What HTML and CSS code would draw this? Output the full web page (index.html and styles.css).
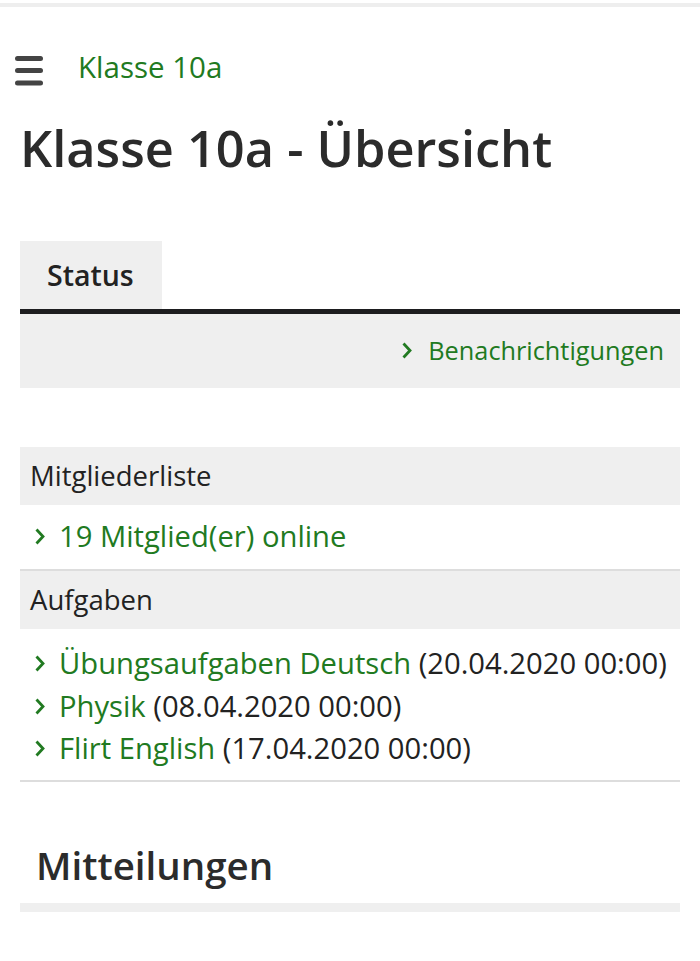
FILE: index.html
```html
<!DOCTYPE html>
<html lang="de">
<head>
<meta charset="utf-8">
<title>Klasse 10a - Übersicht</title>
<link rel="stylesheet" href="styles.css">
</head>
<body>
<div class="topbar"></div>
<header class="crumb">
  <svg class="burger" width="28" height="30" viewBox="0 0 28 30" aria-hidden="true">
    <rect x="0" y="0" width="28" height="5" rx="2.5" fill="#444"/>
    <rect x="0" y="12" width="28" height="5" rx="2.5" fill="#444"/>
    <rect x="0" y="24.5" width="28" height="5" rx="2.5" fill="#444"/>
  </svg>
  <a class="crumb-link" href="#">Klasse 10a</a>
</header>
<main class="page">
  <h1 class="title">Klasse 10a - Übersicht</h1>

  <div class="tabs">
    <div class="tab">Status</div>
  </div>
  <div class="tab-panel">
    <a class="link" href="#"><svg class="chev" width="10" height="17" viewBox="0 0 10 17" aria-hidden="true"><path d="M1.5 1.5 L8 8.5 L1.5 15.5" fill="none" stroke="currentColor" stroke-width="2.8"/></svg>Benachrichtigungen</a>
  </div>

  <section class="block">
    <div class="block-head">Mitgliederliste</div>
    <div class="block-body single">
      <a class="link" href="#"><svg class="chev" width="10" height="17" viewBox="0 0 10 17" aria-hidden="true"><path d="M1.5 1.5 L8 8.5 L1.5 15.5" fill="none" stroke="currentColor" stroke-width="2.8"/></svg>19 Mitglied(er) online</a>
    </div>
    <div class="block-head">Aufgaben</div>
    <div class="block-body list">
      <div class="item"><a class="link" href="#"><svg class="chev" width="10" height="17" viewBox="0 0 10 17" aria-hidden="true"><path d="M1.5 1.5 L8 8.5 L1.5 15.5" fill="none" stroke="currentColor" stroke-width="2.8"/></svg>Übungsaufgaben Deutsch</a> (20.04.2020 00:00)</div>
      <div class="item"><a class="link" href="#"><svg class="chev" width="10" height="17" viewBox="0 0 10 17" aria-hidden="true"><path d="M1.5 1.5 L8 8.5 L1.5 15.5" fill="none" stroke="currentColor" stroke-width="2.8"/></svg>Physik</a> (08.04.2020 00:00)</div>
      <div class="item"><a class="link" href="#"><svg class="chev" width="10" height="17" viewBox="0 0 10 17" aria-hidden="true"><path d="M1.5 1.5 L8 8.5 L1.5 15.5" fill="none" stroke="currentColor" stroke-width="2.8"/></svg>Flirt English</a> (17.04.2020 00:00)</div>
    </div>
  </section>

  <h2 class="subtitle">Mitteilungen</h2>
  <div class="subbar"></div>
</main>
</body>
</html>
```

FILE: styles.css
```css
* { box-sizing: border-box; }
html, body { margin: 0; padding: 0; background: #fff; }
body {
  font-family: "Open Sans", "Noto Sans", sans-serif;
  color: #222;
  width: 700px;
  height: 961px;
  overflow: hidden;
}
a { text-decoration: none; color: #217a21; }

.topbar {
  margin-top: 3px;
  height: 4px;
  background: #eeeeee;
}

.crumb {
  display: flex;
  align-items: center;
  gap: 35px;
  padding: 49px 15px 0;
  height: 79px;
}
.burger { display: block; flex: none; }
.crumb-link {
  font-size: 29.5px;
  line-height: 30px;
  padding-bottom: 8px;
  color: #217a21;
}

.page { padding: 0 20px; }

.title {
  margin: 29px 0 0;
  font-size: 50.5px;
  line-height: 66px;
  font-weight: 600;
  color: #2b2b2b;
}

.tabs {
  display: flex;
  margin-top: 60px;
}
.tab {
  width: 142px;
  height: 68px;
  background: #efefef;
  font-size: 28.5px;
  font-weight: 600;
  color: #222;
  padding-left: 27px;
  line-height: 68px;
}

.tab-panel {
  border-top: 5px solid #1d1d1f;
  background: #efefef;
  height: 79px;
  display: flex;
  justify-content: flex-end;
  align-items: center;
  padding-right: 16px;
  padding-bottom: 2px;
  font-size: 25.3px;
}

.chev {
  display: inline-block;
  margin-right: 14px;
  vertical-align: 2px;
}
.tab-panel .chev { margin-right: 16px; vertical-align: 1px; }

.block { margin-top: 59px; }
.block-head {
  background: #efefef;
  height: 58px;
  line-height: 58px;
  padding-left: 10px;
  font-size: 27.5px;
  color: #222;
}
.block-body {
  border-bottom: 2px solid #dddddd;
  font-size: 29.2px;
}
.block-body.single {
  height: 66px;
  display: flex;
  align-items: center;
  padding-left: 15px;
  padding-bottom: 2px;
}
.block-body.list {
  padding: 13px 0 10px 15px;
  line-height: 42.5px;
}
.item {
  color: #222;
  height: 42.5px;
  white-space: nowrap;
}

.subtitle {
  margin: 54px 0 0;
  padding-left: 16px;
  padding-bottom: 9px;
  font-size: 38.5px;
  line-height: 58px;
  font-weight: 600;
  color: #2b2b2b;
}
.subbar {
  height: 9px;
  background: #efefef;
}
```
